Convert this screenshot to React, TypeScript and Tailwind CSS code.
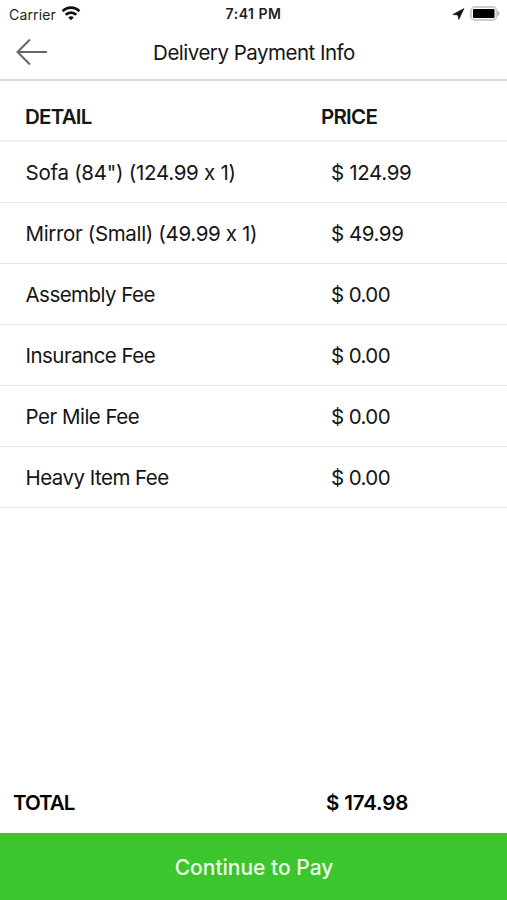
const items = [
  { label: 'Sofa (84") (124.99 x 1)', price: '$ 124.99', labelClass: 'tracking-[-0.27px]', priceClass: 'tracking-[-0.35px]' },
  { label: 'Mirror (Small) (49.99 x 1)', price: '$ 49.99', labelClass: 'tracking-[-0.34px]', priceClass: 'tracking-[-0.45px]' },
  { label: 'Assembly Fee', price: '$ 0.00', labelClass: 'tracking-[-0.53px]', priceClass: 'tracking-[-0.6px]' },
  { label: 'Insurance Fee', price: '$ 0.00', labelClass: 'tracking-[-0.53px]', priceClass: 'tracking-[-0.6px]' },
  { label: 'Per Mile Fee', price: '$ 0.00', labelClass: 'tracking-[-0.5px]', priceClass: 'tracking-[-0.6px]' },
  { label: 'Heavy Item Fee', price: '$ 0.00', labelClass: 'tracking-[-0.53px]', priceClass: 'tracking-[-0.6px]' },
]

function WifiIcon() {
  return (
    <svg width="20" height="16" viewBox="0 0 20 16" fill="none" stroke="#111" strokeWidth="2.7">
      <path d="M1.6 5.2C6.3.4 13.7.4 18.4 5.2" />
      <path d="M4.7 8.7C7.7 5.8 12.3 5.8 15.3 8.7" />
      <path d="M7.2 11.4C8.8 10 11.2 10 12.8 11.4L10 14.2Z" fill="#111" stroke="none" />
    </svg>
  )
}

function StatusBar() {
  return (
    <div className="grid h-[27px] grid-cols-3 items-center px-[9px] text-[14px] text-[#222]">
      <div className="flex items-center gap-[5px]">
        <span className="pt-px tracking-[0.15px]">Carrier</span>
        <WifiIcon />
      </div>
      <span className="text-center font-semibold tracking-[0.5px]">7:41 PM</span>
      <div className="-mr-[2px] flex items-center justify-end gap-[5px]">
        <svg width="13" height="12" viewBox="0 0 13 12" fill="#111" stroke="#111" strokeWidth=".6" strokeLinejoin="round"><path d="M12 .6L.8 6.5L5.8 6.9L6.8 11.5Z" /></svg>
        <svg width="30" height="15" viewBox="0 0 30 15">
          <rect x="1" y="1" width="25.5" height="13" rx="4" fill="#fff" stroke="#cdcdcd" strokeWidth="2" />
          <rect x="3" y="3" width="21.5" height="9" rx="1" fill="#000" />
          <path d="M27.5 5.2C30 5.8 30 9.2 27.5 9.8Z" fill="#aaa" />
        </svg>
      </div>
    </div>
  )
}

export default function App() {
  return (
    <div className="flex h-screen flex-col bg-white font-['Inter',sans-serif] text-[20.5px] text-[#151515]">
      <header className="h-[81px] border-b-2 border-[#dcdcdc]">
        <StatusBar />
        <div className="grid h-[52px] grid-cols-[48px_1fr_47px] items-center">
          <button className="-mt-[2px] pl-4" aria-label="Back">
            <svg width="32" height="28" viewBox="0 0 32 28" fill="none" stroke="#666" strokeWidth="2"><path d="M14 1.5L1.5 14L14 26.5M1.5 14H31" /></svg>
          </button>
          <h1 className="text-center tracking-[-0.5px]">Delivery Payment Info</h1>
        </div>
      </header>
      <div className="flex h-[61px] items-center border-b-2 border-[#efefef] pt-[13px] font-semibold tracking-[-0.75px]">
        <span className="w-[321px] pl-[25px]">DETAIL</span><span>PRICE</span>
      </div>
      {items.map(i => (
        <div key={i.label} className="flex h-[61px] items-center border-b border-[#e8e8e8] pt-[2px]">
          <span className={`w-[331px] pl-[25.5px] ${i.labelClass}`}>{i.label}</span>
          <span className={i.priceClass}>{i.price}</span>
        </div>
      ))}
      <div className="mt-auto flex h-[60px] items-center font-semibold text-black">
        <span className="w-[326px] pl-[13px] tracking-[-1px]">TOTAL</span>
        <span className="tracking-[-0.15px]">$ 174.98</span>
      </div>
      <button className="h-[67px] bg-[#3dc52e] pt-[2px] pl-px text-[21px] font-medium text-[#effcec]">Continue to Pay</button>
    </div>
  )
}
